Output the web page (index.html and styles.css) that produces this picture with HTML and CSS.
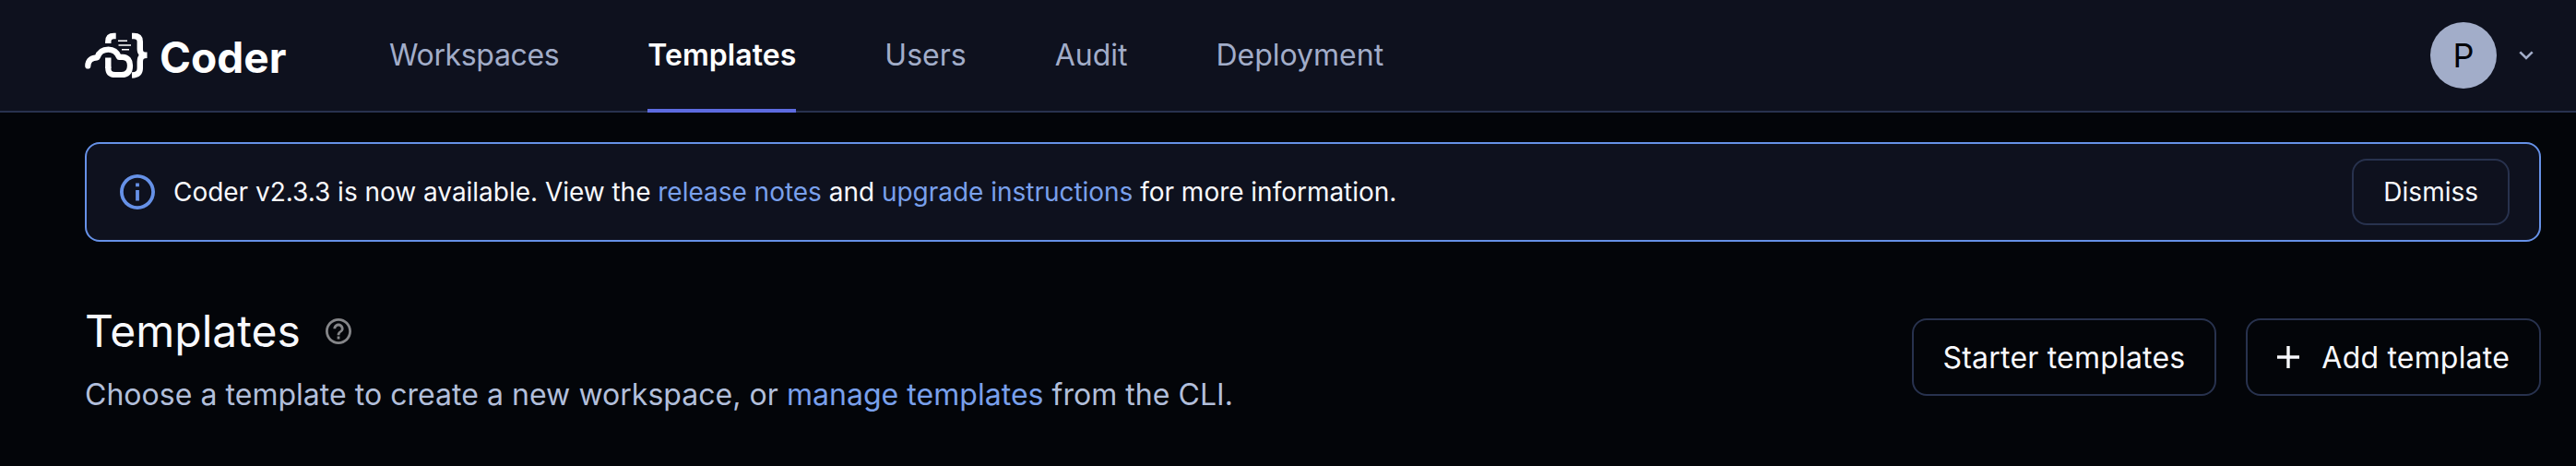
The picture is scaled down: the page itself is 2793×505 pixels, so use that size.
FILE: index.html
```html
<!DOCTYPE html>
<html lang="en">
<head>
<meta charset="utf-8">
<title>Templates - Coder</title>
<link rel="stylesheet" href="styles.css">
</head>
<body>
<header class="navbar">
  <a class="brand">
    <svg class="brand-mark" viewBox="0 0 68 50" fill="none" stroke="#fff">
      <path d="M3.300 36.500C3.300 30 8 27.300 13.500 27.300C15.500 21 20 18.700 25.500 18.700C31.500 18.700 35 22 37 26.800H41C46.500 26.800 49 31 49 36C49 42.500 46 46 40 46H33C27.500 46 25.300 43.500 25.300 38.500" stroke-width="6.200" stroke-linecap="round" stroke-linejoin="round"/>
      <path d="M25.300 39V27.500" stroke-width="6.400"/>
      <path d="M33.700 4H31.500C27 4 25.300 6.500 25.300 10V12" stroke-width="6.400"/>
      <path d="M51 4H53C57.500 4 59.800 6 59.800 10V18C59.800 22 61 24.800 67.500 24.800C61 24.800 59.800 28 59.800 32V39C59.800 43.500 57.500 46.200 51 46.500" stroke-width="6.400"/>
      <path d="M36 9.300H46M36.500 14H50M40 18.800H48" stroke-width="1.600"/>
    </svg>
    <span class="brand-name">Coder</span>
  </a>
  <nav class="links">
    <a class="link workspaces">Workspaces</a>
    <a class="link active">Templates</a>
    <a class="link">Users</a>
    <a class="link">Audit</a>
    <a class="link">Deployment</a>
  </nav>
  <div class="user">
    <span class="avatar">P</span>
    <svg class="chevron" viewBox="0 0 16 10"><path d="M1.300 1.300L8 8L14.700 1.300" fill="none" stroke="#a2adc9" stroke-width="2.600"/></svg>
  </div>
</header>
<section class="banner">
  <svg class="info" viewBox="2 2 20 20"><path fill="#6691e7" d="M11 7h2v2h-2zm0 4h2v6h-2zm1-9C6.480 2 2 6.480 2 12s4.480 10 10 10 10-4.480 10-10S17.520 2 12 2zm0 18c-4.410 0-8-3.590-8-8s3.590-8 8-8 8 3.590 8 8-3.590 8-8 8z"/></svg>
  <p class="message">Coder v2.3.3 is now available. View the <a class="anchor">release notes</a> and <a class="anchor">upgrade instructions</a> for more information.</p>
  <button class="button small">Dismiss</button>
</section>
<main class="page-header">
  <div class="heading">
    <h1 class="title">Templates
      <svg class="help" viewBox="2 2 20 20"><path fill="#858689" d="M11 18h2v-2h-2v2zm1-16C6.480 2 2 6.480 2 12s4.480 10 10 10 10-4.480 10-10S17.520 2 12 2zm0 18c-4.410 0-8-3.590-8-8s3.590-8 8-8 8 3.590 8 8-3.590 8-8 8zm0-14c-2.210 0-4 1.790-4 4h2c0-1.100.9-2 2-2s2 .9 2 2c0 2-3 1.750-3 5h2c0-2.250 3-2.500 3-5 0-2.210-1.790-4-4-4z"/></svg>
    </h1>
    <p class="subtitle">Choose a template to create a new workspace, or <a class="anchor">manage templates</a> from the CLI.</p>
  </div>
  <div class="actions">
    <button class="button">Starter templates</button>
    <button class="button"><svg class="plus" viewBox="0 0 24 24"><path d="M12 0V24M0 12H24" stroke="#f8f9fd" stroke-width="3.400"/></svg>Add template</button>
  </div>
</main>
</body>
</html>
```

FILE: styles.css
```css
* { box-sizing: border-box; }
body {
  margin: 0;
  height: 505px;
  overflow: hidden;
  background: #030509;
  color: #f8f9fd;
  font-family: Inter, "Liberation Sans", sans-serif;
  font-size: 32px;
}
.navbar {
  display: flex;
  height: 122px;
  padding: 0 46px 0 92px;
  background: #0e111e;
  border-bottom: 2px solid #28324e;
}
.brand {
  display: flex;
  align-items: center;
  width: 282px;
  color: #fff;
}
.brand-mark { width: 68px; height: 50px; flex: none; }
.brand-name { margin: 4px 0 0 13px; font-size: 46px; font-weight: 700; }
.links { display: flex; }
.link {
  height: 122px;
  margin: 0 48px;
  line-height: 120px;
  color: #a2adc9;
}
.workspaces { letter-spacing: -0.35px; }
.active {
  color: #fff;
  font-weight: 600;
  letter-spacing: 0.05px;
  border-bottom: 4px solid #5d6be0;
}
.user {
  display: flex;
  align-items: center;
  gap: 24px;
  margin-left: auto;
}
.avatar {
  width: 72px;
  height: 72px;
  border-radius: 50%;
  background: #a2adc9;
  color: #030409;
  font-size: 36px;
  line-height: 72px;
  text-align: center;
}
.chevron { width: 16px; height: 10px; }
.banner {
  display: flex;
  align-items: center;
  height: 108px;
  margin: 32px 38px 0 92px;
  padding: 0 32px 0 36px;
  border: 2px solid #6691e7;
  border-radius: 16px;
  background: #0e111e;
}
.info { width: 38px; height: 38px; }
.message { margin: 0 0 0 20px; font-size: 28px; letter-spacing: -0.022px; }
.anchor { color: #79a0ec; }
.button {
  display: flex;
  align-items: center;
  justify-content: center;
  height: 84px;
  padding: 0 32px;
  border: 2px solid #28324e;
  border-radius: 16px;
  background: transparent;
  color: #f8f9fd;
  font: inherit;
  letter-spacing: 0.2px;
}
.small {
  height: 72px;
  margin-left: auto;
  padding: 0 32px;
  font-size: 28px;
  letter-spacing: 0;
}
.page-header {
  display: flex;
  justify-content: space-between;
  padding: 68px 38px 0 92px;
}
.title {
  display: flex;
  align-items: center;
  gap: 27px;
  margin: 0;
  font-size: 48px;
  font-weight: 400;
  line-height: 58px;
}
.help { width: 28px; height: 28px; }
.subtitle {
  margin: 14px 0 0;
  line-height: 51px;
  letter-spacing: 0.035px;
  color: #b2bfdb;
}
.actions { display: flex; gap: 32px; margin-top: 15px; }
.plus { width: 24px; height: 24px; margin-right: 24px; }
```
